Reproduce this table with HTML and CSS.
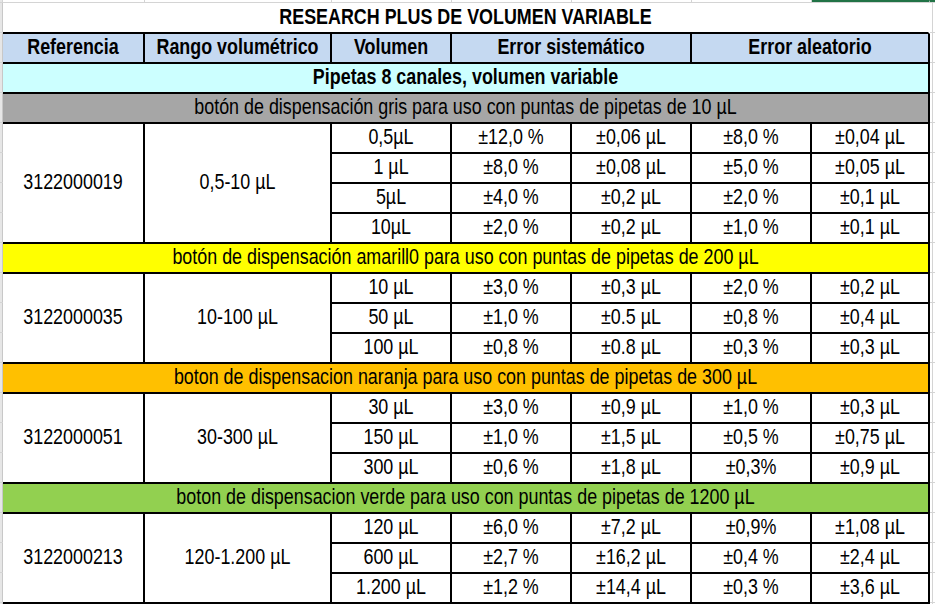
FILE: index.html
```html
<!DOCTYPE html>
<html lang="es">
<head>
<meta charset="utf-8">
<title>Research Plus de volumen variable</title>
<link rel="stylesheet" href="styles.css">
</head>
<body>
<div class="sheet">
  <div class="topband">
    <div class="seg s0"></div><div class="seg s1"></div><div class="seg s2"></div><div class="seg s3"></div><div class="seg s4"></div><div class="seg s5"></div><div class="seg s6"></div><div class="seg s7 sel"></div><div class="seg s8 sel"></div>
  </div>
  <div class="main">
    <div class="edge edge-left"></div>
    <div class="grid">
      <div class="c title full"><span class="t">RESEARCH PLUS DE VOLUMEN VARIABLE</span></div>

      <div class="c head"><span class="t">Referencia</span></div>
      <div class="c head"><span class="t">Rango volumétrico</span></div>
      <div class="c head"><span class="t">Volumen</span></div>
      <div class="c head span2"><span class="t">Error sistemático</span></div>
      <div class="c head span2"><span class="t">Error aleatorio</span></div>

      <div class="c sub full"><span class="t">Pipetas 8 canales, volumen variable</span></div>

      <div class="c band gray full"><span class="t">botón de dispensación gris para uso con puntas de pipetas de 10 µL</span></div>
      <div class="c rows4"><span class="t">3122000019</span></div>
      <div class="c rows4"><span class="t">0,5-10 µL</span></div>
      <div class="c"><span class="t">0,5µL</span></div><div class="c"><span class="t">±12,0 %</span></div><div class="c"><span class="t">±0,06 µL</span></div><div class="c"><span class="t">±8,0 %</span></div><div class="c"><span class="t">±0,04 µL</span></div>
      <div class="c"><span class="t">1 µL</span></div><div class="c"><span class="t">±8,0 %</span></div><div class="c"><span class="t">±0,08 µL</span></div><div class="c"><span class="t">±5,0 %</span></div><div class="c"><span class="t">±0,05 µL</span></div>
      <div class="c"><span class="t">5µL</span></div><div class="c"><span class="t">±4,0 %</span></div><div class="c"><span class="t">±0,2 µL</span></div><div class="c"><span class="t">±2,0 %</span></div><div class="c"><span class="t">±0,1 µL</span></div>
      <div class="c"><span class="t">10µL</span></div><div class="c"><span class="t">±2,0 %</span></div><div class="c"><span class="t">±0,2 µL</span></div><div class="c"><span class="t">±1,0 %</span></div><div class="c"><span class="t">±0,1 µL</span></div>

      <div class="c band yellow full"><span class="t">botón de dispensación amarill0 para uso con puntas de pipetas de 200 µL</span></div>
      <div class="c rows3"><span class="t">3122000035</span></div>
      <div class="c rows3"><span class="t">10-100 µL</span></div>
      <div class="c"><span class="t">10 µL</span></div><div class="c"><span class="t">±3,0 %</span></div><div class="c"><span class="t">±0,3 µL</span></div><div class="c"><span class="t">±2,0 %</span></div><div class="c"><span class="t">±0,2 µL</span></div>
      <div class="c"><span class="t">50 µL</span></div><div class="c"><span class="t">±1,0 %</span></div><div class="c"><span class="t">±0.5 µL</span></div><div class="c"><span class="t">±0,8 %</span></div><div class="c"><span class="t">±0,4 µL</span></div>
      <div class="c"><span class="t">100 µL</span></div><div class="c"><span class="t">±0,8 %</span></div><div class="c"><span class="t">±0.8 µL</span></div><div class="c"><span class="t">±0,3 %</span></div><div class="c"><span class="t">±0,3 µL</span></div>

      <div class="c band orange full"><span class="t">boton de dispensacion naranja para uso con puntas de pipetas de 300 µL</span></div>
      <div class="c rows3"><span class="t">3122000051</span></div>
      <div class="c rows3"><span class="t">30-300 µL</span></div>
      <div class="c"><span class="t">30 µL</span></div><div class="c"><span class="t">±3,0 %</span></div><div class="c"><span class="t">±0,9 µL</span></div><div class="c"><span class="t">±1,0 %</span></div><div class="c"><span class="t">±0,3 µL</span></div>
      <div class="c"><span class="t">150 µL</span></div><div class="c"><span class="t">±1,0 %</span></div><div class="c"><span class="t">±1,5 µL</span></div><div class="c"><span class="t">±0,5 %</span></div><div class="c"><span class="t">±0,75 µL</span></div>
      <div class="c"><span class="t">300 µL</span></div><div class="c"><span class="t">±0,6 %</span></div><div class="c"><span class="t">±1,8 µL</span></div><div class="c"><span class="t">±0,3%</span></div><div class="c"><span class="t">±0,9 µL</span></div>

      <div class="c band green full"><span class="t">boton de dispensacion verde para uso con puntas de pipetas de 1200 µL</span></div>
      <div class="c rows3"><span class="t">3122000213</span></div>
      <div class="c rows3"><span class="t">120-1.200 µL</span></div>
      <div class="c"><span class="t">120 µL</span></div><div class="c"><span class="t">±6,0 %</span></div><div class="c"><span class="t">±7,2 µL</span></div><div class="c"><span class="t">±0,9%</span></div><div class="c"><span class="t">±1,08 µL</span></div>
      <div class="c"><span class="t">600 µL</span></div><div class="c"><span class="t">±2,7 %</span></div><div class="c"><span class="t">±16,2 µL</span></div><div class="c"><span class="t">±0,4 %</span></div><div class="c"><span class="t">±2,4 µL</span></div>
      <div class="c"><span class="t">1.200 µL</span></div><div class="c"><span class="t">±1,2 %</span></div><div class="c"><span class="t">±14,4 µL</span></div><div class="c"><span class="t">±0,3 %</span></div><div class="c"><span class="t">±3,6 µL</span></div>
    </div>
    <div class="edge edge-right"></div>
  </div>
</div>
</body>
</html>
```

FILE: styles.css
```css
html, body {
  margin: 0;
  padding: 0;
  background: #ffffff;
}

.sheet {
  width: 935px;
  height: 606px;
  overflow: hidden;
  display: flex;
  flex-direction: column;
  font-family: "Liberation Sans", Arial, sans-serif;
  font-size: 17.9px;
  color: #000;
}

/* Excel gridline strip above the table */
.topband {
  display: flex;
  height: 3px;
  flex: none;
}
.seg {
  box-sizing: border-box;
  height: 3px;
  border-right: 1px solid #d4d4d4;
  border-bottom: 1px solid #d4d4d4;
}
.s0 { width: 3px; background: #e6e6e6; }
.s1 { width: 142px; }
.s2 { width: 187px; }
.s3 { width: 120px; }
.s4 { width: 120px; }
.s5 { width: 120px; }
.s6 { width: 120px; }
.s7 { width: 118px; }
.s8 { flex: 1; border-right: none; }
.sel { border-top: 2px solid #217346; }

.main {
  display: flex;
  flex: none;
}

.edge {
  flex: none;
  align-self: stretch;
}
.edge-left {
  width: 3px;
  background:
    repeating-linear-gradient(to bottom, transparent 0 29px, #d4d4d4 29px 30px),
    linear-gradient(to right, #e6e6e6 0 2px, #c8c8c8 2px 3px);
}
.edge-right {
  width: 5px;
  background:
    repeating-linear-gradient(to bottom, transparent 0 29px, #d4d4d4 29px 30px),
    linear-gradient(to right, #ffffff 0 2px, #d4d4d4 2px 3px, #ffffff 3px);
}

.grid {
  display: grid;
  grid-template-columns: 142px 187px 120px 120px 120px 120px 118px;
  grid-template-rows: 31px repeat(19, 30px);
}

.c {
  box-sizing: border-box;
  border-right: 2px solid #000;
  border-bottom: 2px solid #000;
  display: flex;
  align-items: center;
  justify-content: center;
  background: #fff;
  overflow: visible;
  white-space: nowrap;
}

.t {
  display: inline-block;
  line-height: 1;
  transform: scaleY(1.2);
}

.full { grid-column: 1 / -1; }
.span2 { grid-column: span 2; }
.rows4 { grid-row: span 4; }
.rows3 { grid-row: span 3; }

.title {
  font-weight: bold;
  border-right-color: #fff;
}

.head {
  background: #c5d9f1;
  font-weight: bold;
}

.sub {
  background: #ccffff;
  font-weight: bold;
}

.gray { background: #a6a6a6; }
.yellow { background: #ffff00; }
.orange { background: #ffc000; }
.green { background: #92d050; }
```
